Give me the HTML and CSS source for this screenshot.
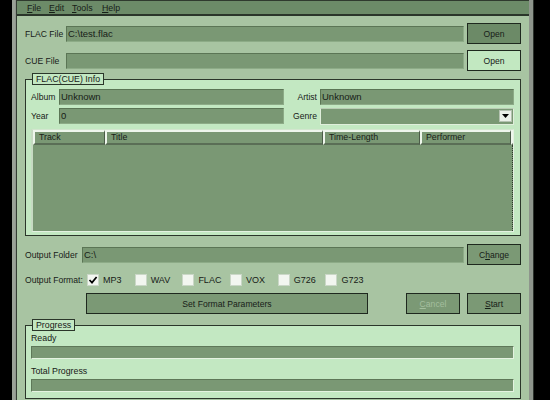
FILE: index.html
```html
<!DOCTYPE html>
<html>
<head>
<meta charset="utf-8">
<link rel="stylesheet" href="styles.css">
</head>
<body>
<div class="frame">
  <div class="win">
    <div class="menubar">
      <span class="menu"><u>F</u>ile</span>
      <span class="menu"><u>E</u>dit</span>
      <span class="menu"><u>T</u>ools</span>
      <span class="menu"><u>H</u>elp</span>
    </div>
    <div class="content">
      <div class="row row-file first">
        <span class="lbl lbl-file">FLAC File</span>
        <div class="field grow">C:\test.flac</div>
        <div class="btn btn-dark">Open</div>
      </div>
      <div class="row row-file second">
        <span class="lbl lbl-file">CUE File</span>
        <div class="field grow"></div>
        <div class="btn btn-light">Open</div>
      </div>

      <fieldset class="group info">
        <legend>FLAC(CUE) Info</legend>
        <div class="irow">
          <span class="ilbl">Album</span>
          <div class="field f-left">Unknown</div>
          <span class="ilbl2">Artist</span>
          <div class="field f-right">Unknown</div>
        </div>
        <div class="irow irow2">
          <span class="ilbl">Year</span>
          <div class="field f-left">0</div>
          <span class="ilbl2">Genre</span>
          <div class="field f-right select">
            <span class="drop"><svg width="7" height="4" viewBox="0 0 7 4"><path d="M0 0H7L3.5 4Z" fill="#000"/></svg></span>
          </div>
        </div>
        <div class="table">
          <div class="thead">
            <div class="th c-track">Track</div>
            <div class="th c-title">Title</div>
            <div class="th c-time">Time-Length</div>
            <div class="th c-perf">Performer</div>
            <div class="th c-fill"></div>
          </div>
          <div class="tbody"></div>
        </div>
      </fieldset>

      <div class="row row-out">
        <span class="lbl lbl-out">Output Folder</span>
        <div class="field grow">C:\</div>
        <div class="btn btn-mid">C<u>h</u>ange</div>
      </div>

      <div class="row row-fmt">
        <span class="lbl lbl-fmt">Output Format:</span>
        <div class="fmt"><span class="cb"><svg width="10" height="10" viewBox="0 0 10 10"><path d="M1.5 5 L4 7.6 L8.6 2" fill="none" stroke="#000" stroke-width="1.7"/></svg></span>MP3</div>
        <div class="fmt"><span class="cb"></span>WAV</div>
        <div class="fmt"><span class="cb"></span>FLAC</div>
        <div class="fmt"><span class="cb"></span>VOX</div>
        <div class="fmt"><span class="cb"></span>G726</div>
        <div class="fmt"><span class="cb"></span>G723</div>
      </div>

      <div class="row row-act">
        <div class="btn btn-mid btn-params">Set Format Parameters</div>
        <div class="btn btn-mid btn-cancel"><u>C</u>ancel</div>
        <div class="btn btn-mid btn-start"><u>S</u>tart</div>
      </div>

      <fieldset class="group progress">
        <legend>Progress</legend>
        <div class="plbl">Ready</div>
        <div class="bar"></div>
        <div class="plbl plbl2">Total Progress</div>
        <div class="bar"></div>
      </fieldset>
    </div>
  </div>
</div>
</body>
</html>
```

FILE: styles.css
```css
html, body {
  margin: 0;
  padding: 0;
  background: #000;
  overflow: hidden;
  height: 400px;
}

body {
  font-family: "Liberation Sans", Arial, sans-serif;
  font-size: 8.6px;
  color: #172017;
}

.frame {
  margin-left: 12px;
  width: 513px;
  height: 400px;
  background: #8e958c;
  border-left: 3px solid #9aa197;
  padding-left: 1px;
  padding-right: 4px;
  border-right: 1px solid #2c322c;
}

.win {
  width: 512px;
  height: 400px;
  background: #a8c4a2;
  border-left: 1px solid #343c33;
  overflow: hidden;
}

.menubar {
  height: 13px;
  background: #6c8b68;
  border-top: 1px solid #2f3a2e;
  border-bottom: 2px solid #2a352a;
  display: flex;
  align-items: center;
  padding-left: 10px;
  font-size: 8.8px;
}

.menu {
  margin-right: 8px;
}

.menu:nth-child(1) { width: 14px; }
.menu:nth-child(2) { width: 15px; }
.menu:nth-child(3) { width: 22px; }

.content {
  padding: 0 8px;
}

.row {
  display: flex;
  align-items: center;
}

.row-file {
  height: 21px;
}

.row-file.first {
  margin-top: 7px;
}

.row-file.second {
  margin-top: 6px;
}

.lbl {
  flex: none;
  white-space: nowrap;
}

.lbl-file { width: 41px; }
.lbl-out { width: 57px; }
.lbl-fmt { width: 62px; }

.field {
  box-sizing: border-box;
  height: 16px;
  background: #7a9874;
  border-top: 1px solid #5b7555;
  border-left: 1px solid #5b7555;
  border-bottom: 1px solid #8dab87;
  border-right: 1px solid #8dab87;
  font-size: 9.5px;
  line-height: 14px;
  padding-left: 1px;
  white-space: nowrap;
  overflow: hidden;
}

.grow {
  flex: 1;
}

.btn {
  box-sizing: border-box;
  flex: none;
  width: 54px;
  height: 21px;
  margin-left: 3px;
  border: 1px solid #1e281e;
  display: flex;
  align-items: center;
  justify-content: center;
  font-size: 8.6px;
}

.btn-dark { background: #6c8a67; }
.btn-light { background: #c2e8c1; }
.btn-mid { background: #7b9975; }

/* group boxes */
.group {
  margin: 2px 0 0 0;
  border: 1px solid #2b362a;
  background: #c3e8c2;
  padding: 4px 6px 3px 5px;
  min-width: 0;
}

.group legend {
  margin-left: 1px;
  padding: 0 3px;
  border: 1px solid #2b362a;
  background: #c3e8c2;
  line-height: 10px;
  font-size: 8.8px;
}

.irow {
  display: flex;
  align-items: center;
  height: 16px;
}

.irow2 {
  margin-top: 3px;
}

.ilbl {
  width: 28px;
  flex: none;
}

.ilbl2 {
  width: 36px;
  flex: none;
  text-align: right;
  padding-right: 3px;
  box-sizing: border-box;
}

.f-left { width: 225px; flex: none; }
.f-right { width: 194px; flex: none; }

.select {
  position: relative;
  border: 1px solid #dfeedb;
  border-top-color: #b8ccb3;
  height: 17px;
}

.drop {
  position: absolute;
  right: 1px;
  top: 1px;
  width: 13px;
  height: 12px;
  background: #eaf0e8;
  border: 1px solid #b4c2b1;
  box-sizing: border-box;
  display: flex;
  align-items: center;
  justify-content: center;
}

.table {
  margin-top: 5px;
  height: 103px;
  background: #7a9874;
  border-top: 1px solid #d3e6cf;
  border-left: 2px solid #c6dbc2;
  border-right: 1px solid #e4f1e1;
  border-bottom: 1px solid #e4f1e1;
  box-sizing: border-box;
  display: flex;
  flex-direction: column;
}

.thead {
  display: flex;
  height: 15px;
  flex: none;
}

.th {
  box-sizing: border-box;
  height: 15px;
  border-top: 2px solid #eef6ec;
  border-left: 2px solid #eef6ec;
  border-right: 1px solid #4b5c48;
  border-bottom: 2px solid #5a6e56;
  padding-left: 4px;
  line-height: 11px;
  font-size: 8.8px;
  white-space: nowrap;
  overflow: hidden;
}

.c-track { width: 72px; }
.c-title { width: 218px; }
.c-time { width: 97px; }
.c-perf { width: 91px; }
.c-fill { width: 2px; padding: 0; border-right: none; }

.tbody {
  flex: 1;
  border-right: 1px dotted #2e382d;
}

/* output rows */
.row-out {
  height: 21px;
  margin-top: 8px;
}

.row-fmt {
  height: 14px;
  margin-top: 8px;
}

.fmt {
  display: flex;
  align-items: center;
  width: 47.7px;
  flex: none;
  font-size: 9px;
}

.cb {
  box-sizing: border-box;
  width: 12px;
  height: 12px;
  background: #f2f6f0;
  border: 1px solid #cad7c7;
  margin-right: 4px;
  display: flex;
  align-items: center;
  justify-content: center;
}

.row-act {
  height: 21px;
  margin-top: 6px;
}

.btn-params {
  width: 282px;
  margin-left: 61px;
}

.btn-cancel {
  margin-left: auto;
  color: #a4bf9e;
}

.btn-start {
  margin-left: 7px;
}

.group.progress {
  margin-top: 5px;
  padding: 2px 6px 6px 5px;
}

.plbl {
  height: 11px;
  line-height: 11px;
  font-size: 8.8px;
}

.plbl2 {
  margin-top: 7px;
}

.bar {
  box-sizing: border-box;
  margin-top: 2px;
  height: 13px;
  background: #7a9874;
  border-top: 1px solid #5e7858;
  border-left: 1px solid #5e7858;
  border-bottom: 1px solid #e4f3e0;
  border-right: 1px solid #e4f3e0;
}
```
